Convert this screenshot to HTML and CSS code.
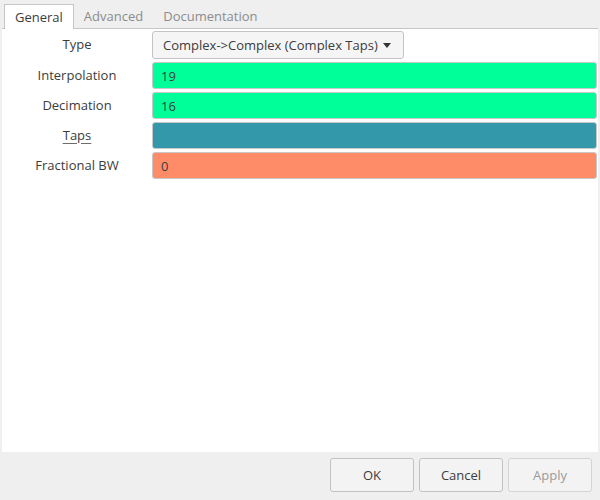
FILE: index.html
```html
<!DOCTYPE html>
<html lang="en">
<head>
<meta charset="utf-8">
<title>Properties</title>
<link rel="stylesheet" href="styles.css">
</head>
<body>
<div class="dlg">
  <ul class="tabs">
    <li class="on">General</li>
    <li>Advanced</li>
    <li>Documentation</li>
  </ul>
  <section class="panel">
    <div class="params">
      <label>Type</label>
      <div class="combo">Complex-&gt;Complex (Complex Taps) <span class="arrow"></span></div>
      <label>Interpolation</label>
      <div class="field int">19</div>
      <label>Decimation</label>
      <div class="field int">16</div>
      <label><u>Taps</u></label>
      <div class="field cvec"></div>
      <label>Fractional BW</label>
      <div class="field flt">0</div>
    </div>
  </section>
  <div class="btn-area">
    <button type="button">OK</button>
    <button type="button">Cancel</button>
    <button type="button" disabled>Apply</button>
  </div>
</div>
</body>
</html>
```

FILE: styles.css
```css
*{margin:0;padding:0;box-sizing:border-box}
body{background-color:#efefef;font-family:"Open Sans","Noto Sans",sans-serif;font-size:13px;color:#3c3c3c}
.dlg{display:flex;flex-direction:column;height:500px}
.tabs{display:flex;padding:4px 0 0 4px;list-style:none}
.tabs li{height:25px;margin-bottom:-1px;padding:0 10px;line-height:24px;color:#8c8c8c;position:relative}
.tabs li.on{border:1px solid #c6c6c6;border-bottom:0;background-color:#fff;color:#3c3c3c;z-index:1}
.panel{flex:1;margin:0 2px;padding-top:2px;border-top:1px solid #c6c6c6;background-color:#fff}
.params{display:grid;grid-template-columns:150px 1fr;row-gap:3px;margin-right:1px}
.params label{display:flex;align-items:center;justify-content:center;padding-bottom:2px}
.params label u{text-decoration-color:#6c6c6c;text-underline-offset:3px}
.combo{display:flex;align-items:center;justify-self:start;height:28px;padding:0 12px 0 10px;border:1px solid #c4c4c4;border-radius:3px;background-color:#f5f5f5;white-space:nowrap}
.combo .arrow{margin-left:5px;border-top:5px solid #333;border-left:4.5px solid transparent;border-right:4.5px solid transparent}
.field{height:27px;padding:0 8px;border:1px solid #c8c8c8;border-radius:3px;line-height:26px}
.field.int{background-color:#00ff99}
.field.cvec{background-color:#3399aa}
.field.flt{background-color:#ff8c69}
.btn-area{display:flex;justify-content:flex-end;gap:5px;height:48px;padding:6px 8px 0 0}
.btn-area button{width:84px;height:34px;border:1px solid #c2c2c2;border-radius:3px;background-color:#f3f3f3;font:inherit;color:#3c3c3c}
.btn-area button:disabled{border-color:#d4d4d4;color:#9a9a9a}
```
